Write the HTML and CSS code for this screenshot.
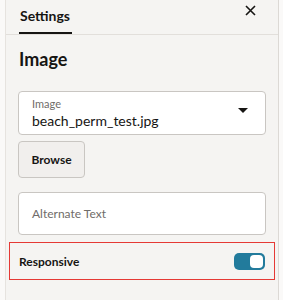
FILE: index.html
```html
<!DOCTYPE html>
<html lang="en">
<head>
    <meta charset="UTF-8">
    <title>Settings</title>
    <link rel="stylesheet" href="styles.css">
</head>
<body>

<!-- Settings drawer -->
<div class="drawer">
    <div class="drawer-header">
        <div class="tab active">Settings</div>
        <button class="close-btn" aria-label="Close">
            <svg width="11" height="11" viewBox="0 0 11 11">
                <path d="M1 1 L10 10 M10 1 L1 10" stroke="#161513" stroke-width="1.6" fill="none"/>
            </svg>
        </button>
    </div>

    <div class="drawer-body">
        <h2>Image</h2>

        <div class="field select-field">
            <div class="field-text">
                <span class="field-label">Image</span>
                <span class="field-value">beach_perm_test.jpg</span>
            </div>
            <svg class="caret" width="10" height="6" viewBox="0 0 10 6">
                <path d="M0 0 H10 L5 5 Z" fill="#161513"/>
            </svg>
        </div>

        <button class="browse-btn">Browse</button>

        <div class="field text-field">
            <span class="placeholder">Alternate Text</span>
        </div>

        <div class="switch-row">
            <span class="switch-label">Responsive</span>
            <div class="switch on"><div class="knob"></div></div>
        </div>
    </div>
</div>

</body>
</html>
```

FILE: styles.css
```css
/* Global */
* {
    margin: 0;
    padding: 0;
    box-sizing: border-box;
}

body {
    font-family: Lato, 'Noto Sans', sans-serif;
    background-color: #faf9f8;
    color: #161513;
    height: 300px;
    overflow: hidden;
}

/* Drawer */
.drawer {
    margin-left: 5px;
    width: 274px;
    height: 300px;
    background-color: #f5f4f2;
    border-left: 1px solid #e6e3df;
    border-right: 1px solid #dcd9d5;
}

.drawer-header {
    display: flex;
    justify-content: space-between;
    align-items: flex-start;
    height: 35px;
    border-bottom: 1px solid #e2dfdb;
    padding-left: 13px;
}

.tab {
    font-size: 14px;
    font-weight: 700;
    padding: 6px 2px 0 1px;
    height: 34px;
    line-height: 19px;
}

.tab.active {
    border-bottom: 2px solid #161513;
}

.close-btn {
    background: none;
    border: none;
    margin: 4px 22px 0 0;
    width: 11px;
    height: 11px;
    cursor: pointer;
}

.drawer-body {
    padding: 12px 12px 0 12px;
}

.drawer-body h2 {
    font-size: 18px;
    font-weight: 700;
    line-height: 24px;
    margin-bottom: 20px;
    padding-left: 1px;
}

/* Fields */
.field {
    width: 248px;
    background-color: #fff;
    border: 1px solid #c9c6c2;
    border-radius: 4px;
}

.select-field {
    height: 44px;
    display: flex;
    justify-content: space-between;
    align-items: center;
    padding: 0 17px 0 13px;
}

.field-text {
    display: flex;
    flex-direction: column;
}

.field-label {
    font-size: 11px;
    color: #6f6c69;
    line-height: 14px;
}

.field-value {
    font-size: 14px;
    line-height: 19px;
}

.caret {
    margin-top: -4px;
}

.browse-btn {
    display: block;
    margin-top: 6px;
    width: 67px;
    height: 37px;
    background-color: #f1efed;
    border: 1px solid #c9c6c2;
    border-radius: 4px;
    font-family: inherit;
    font-size: 12px;
    font-weight: 700;
    color: #161513;
}

.text-field {
    margin-top: 14px;
    height: 43px;
    display: flex;
    align-items: center;
    padding-left: 13px;
}

.placeholder {
    font-size: 12px;
    color: #6f6c69;
}

/* Switch row */
.switch-row {
    margin: 7px 0 0 -9px;
    width: 266px;
    height: 38px;
    border: 1px solid #e53935;
    display: flex;
    justify-content: space-between;
    align-items: center;
    padding: 0 9px 0 9px;
}

.switch-label {
    font-size: 12px;
    font-weight: 700;
}

.switch {
    width: 31px;
    height: 17px;
    border-radius: 5px;
    background-color: #227b9c;
    padding: 2px;
    display: flex;
    justify-content: flex-end;
}

.knob {
    width: 13px;
    height: 13px;
    border-radius: 4px;
    background-color: #fff;
}
```
